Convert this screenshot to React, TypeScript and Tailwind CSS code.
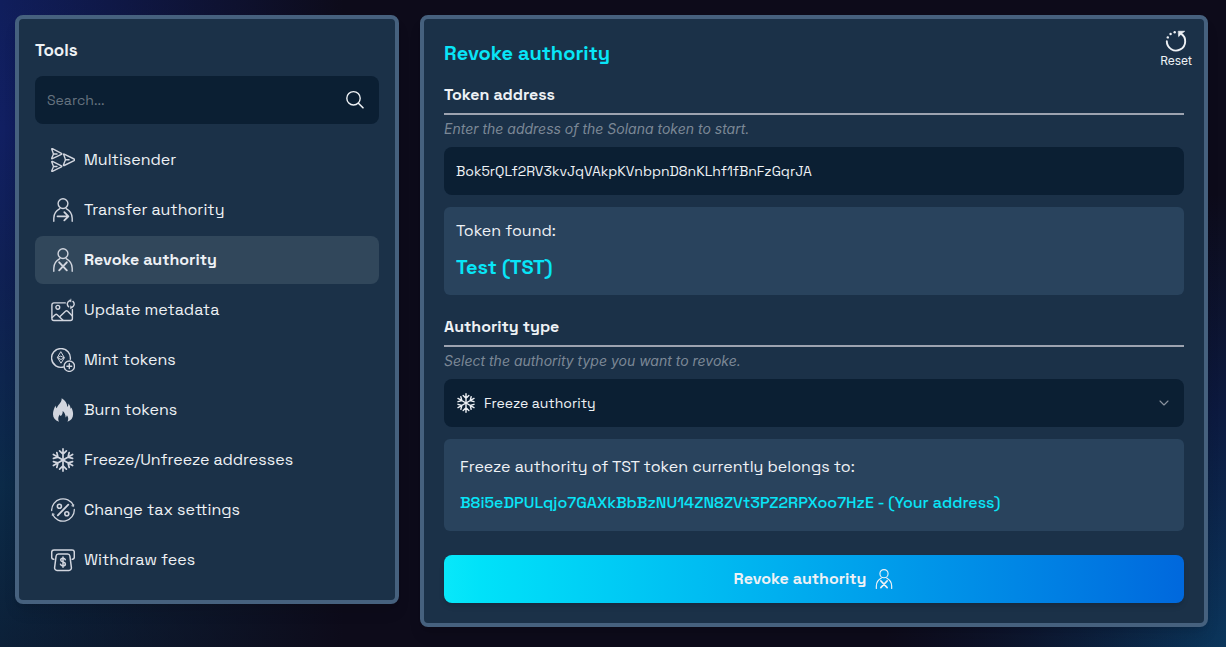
import React from 'react';

type IconProps = { className?: string };

function Icon({ className = 'size-6', children }: React.PropsWithChildren<IconProps>) {
  return (
    <svg
      viewBox="0 0 24 24"
      className={`${className} shrink-0`}
      fill="none"
      stroke="currentColor"
      strokeWidth="1.4"
      strokeLinecap="round"
      strokeLinejoin="round"
      aria-hidden="true"
    >
      {children}
    </svg>
  );
}

const MultisenderIcon = (props: IconProps) => (
  <Icon {...props}>
    <path d="M12.8 6.8c-.5-.5-.2-1 .4-.7l9.9 4.9c.7.4.7 1.2 0 1.6l-9.9 4.9c-.6.3-.9-.2-.7-.7l2-5z" />
    <path d="M14.5 11.8h3.6M.8 1.3c-.2-.5.1-.8.6-.6l9 4.6c.5.3.5.8 0 1.1l-9 4.3c-.5.2-.8-.1-.6-.6L2.5 6z" />
    <path d="M2.5 6H6M.8 14c-.2-.5.1-.8.6-.6l9 4.4c.5.3.5.8 0 1.1l-9 4.4c-.5.2-.8-.1-.6-.6l1.7-4.2zM2.5 18.5H6" />
  </Icon>
);

const TransferIcon = (props: IconProps) => (
  <Icon {...props}>
    <circle cx="12" cy="5.6" r="4.9" />
    <path d="M2.8 23.3v-3c0-4.3 2.4-7.6 6-9.6M21.2 23.3v-3c0-4.3-2.4-7.6-6-9.6" />
    <path d="M6.5 18.3h10.8M13.3 14.2l4.1 4.1-4.1 4.1" strokeWidth="1.8" />
  </Icon>
);

const RevokeIcon = (props: IconProps) => (
  <Icon {...props}>
    <circle cx="12" cy="5.6" r="4.9" />
    <path d="M2.8 23.3v-3c0-4.3 2.4-7.6 6-9.6M21.2 23.3v-3c0-4.3-2.4-7.6-6-9.6" />
    <path d="M8.2 14.3l7.6 8M15.8 14.3l-7.6 8" strokeWidth="1.9" />
  </Icon>
);

const MetadataIcon = (props: IconProps) => (
  <Icon {...props}>
    <path d="M14.3 4.9H2.9a2 2 0 0 0-2 2v13.6a2 2 0 0 0 2 2h16.5a2 2 0 0 0 2-2V11.5" />
    <circle cx="6.8" cy="9.3" r="1.9" />
    <path d="M1.2 19.5l3-2.7a1.5 1.5 0 0 1 2 0l5.800 5.4M9 18.4l5.5-5.2a1.6 1.6 0 0 1 2.2 0l4.4 4.6" />
    <path d="M17.6 8.7a3.5 3.5 0 0 1 1.5-6.1M21.9 3.400a3.5 3.5 0 0 1-1.5 6.1" />
    <path d="M20.1 1.2v2.9l-1.9-1.4zM19.4 8v2.9l1.9-1.4z" fill="currentColor" strokeWidth=".4" />
  </Icon>
);

const MintIcon = (props: IconProps) => (
  <Icon {...props}>
    <path d="M12.5 19A9.4 9.4 0 1 1 19.3 11.2" />
    <path d="M10 4l3.4 5.7L10 15.2 6.6 9.7zM6.8 9.8l3.2 1.7 3.2-1.7L10 8.3z" strokeWidth="1" />
    <circle cx="18.3" cy="18.2" r="5.2" />
    <path d="M18.3 15.8v4.8M15.9 18.2h4.8" />
  </Icon>
);

const BurnIcon = (props: IconProps) => (
  <Icon {...props}>
    <path
      d="M10.7.2c3.6 2 5.4 4.9 5.6 8.8.9-.9 1.2-2 1-3.5 1.6 1.5 2.2 3.3 2.3 5.3.4-.3.6-.6.8-1.2 1.2 2.4 1.7 4.6 1.7 6.6 0 3.6-2 6.3-5.6 7.6 1.2-2.4.9-4.6-.6-6.5-.2 1-.6 1.7-1.3 2.2.1-2.8-.9-4.9-2.9-6.6.1 2.4-.6 3.8-2 5.2-.5-.3-.8-.8-.9-1.5-1.7 2.2-2 4.6-.9 7.2-3.8-1.3-5.9-4-5.9-7.5 0-3 1-5.6 2.5-8.8.2 1.3.6 2.2 1.4 2.8.1-3.2 5-5 4.8-10.1z"
      fill="currentColor"
      stroke="none"
    />
  </Icon>
);

const spokes = [0, 60, 120, 180, 240, 300];

const FreezeIcon = (props: IconProps) => (
  <Icon {...props}>
    {spokes.map((angle) => (
      <path key={angle} transform={`rotate(${angle} 12 12)`} d="M12 12V.9M8.6 2.9L12 6.2l3.4-3.3" strokeWidth="1.7" />
    ))}
  </Icon>
);

const TaxIcon = (props: IconProps) => (
  <Icon {...props}>
    <path d="M.7 12.5A11.3 11.3 0 0 1 22.2 7.3M23.3 11.5A11.3 11.3 0 0 1 1.8 16.7" strokeWidth="1.3" />
    <path d="M22.9 6.5l-.2 2.3-2-.9zM1.1 17.5l.2-2.3 2 .9z" fill="currentColor" strokeWidth=".4" />
    <circle cx="8.4" cy="8.2" r="2" strokeWidth="1.6" />
    <circle cx="15.8" cy="15.8" r="2" strokeWidth="1.6" />
    <path d="M17.3 6.7L6.8 17.3" strokeWidth="1.8" />
  </Icon>
);

const WithdrawIcon = (props: IconProps) => (
  <Icon {...props}>
    <path d="M2.9 11.2h-.3a1.9 1.9 0 0 1-1.9-1.9V4.2a2.2 2.2 0 0 1 2.2-2.2h18.2a2.2 2.2 0 0 1 2.2 2.2v5.1a1.9 1.9 0 0 1-1.9 1.9h-.3" strokeWidth="1.5" />
    <path d="M7.5 6h9a2.4 2.4 0 0 1 2.4 2l1.5 11.7a2.4 2.4 0 0 1-2.4 2.7H6a2.4 2.4 0 0 1-2.4-2.7L5.1 8a2.4 2.4 0 0 1 2.4-2z" strokeWidth="1.5" />
    <path d="M14.3 11.7c-.3-1-1.2-1.4-2.3-1.4-1.3 0-2.3.6-2.3 1.8 0 2.6 4.7 1.2 4.7 3.9 0 1.2-1 1.9-2.4 1.9-1.3 0-2.2-.6-2.5-1.6M12 9v10.2" strokeWidth="1.5" />
  </Icon>
);

const SearchIcon = (props: IconProps) => (
  <Icon {...props}>
    <circle cx="10.5" cy="10.3" r="6.7" />
    <path d="M15.4 15.2l4.6 4.6" strokeWidth="1.6" />
  </Icon>
);

const ResetIcon = (props: IconProps) => (
  <Icon {...props}>
    <path d="M2.8 12.3a9.2 9.2 0 1 0 14.2-7.7" strokeWidth="1.9" />
    <path d="M14.6 2.3h6l-2.7 2-3 3z" fill="currentColor" strokeWidth=".8" />
    <g fill="currentColor" stroke="none">
      <circle cx="3.8" cy="8.4" r="1.2" />
      <circle cx="6.6" cy="5" r="1.2" />
      <circle cx="10.7" cy="3.3" r="1.2" />
    </g>
  </Icon>
);

const ChevronIcon = (props: IconProps) => (
  <Icon {...props}>
    <path d="M4 8l8 8 8-8" strokeWidth="2.2" />
  </Icon>
);

const tools = [
  { name: 'Multisender', icon: MultisenderIcon },
  { name: 'Transfer authority', icon: TransferIcon },
  { name: 'Revoke authority', icon: RevokeIcon, active: true },
  { name: 'Update metadata', icon: MetadataIcon },
  { name: 'Mint tokens', icon: MintIcon },
  { name: 'Burn tokens', icon: BurnIcon },
  { name: 'Freeze/Unfreeze addresses', icon: FreezeIcon },
  { name: 'Change tax settings', icon: TaxIcon },
  { name: 'Withdraw fees', icon: WithdrawIcon },
];

function FieldHeader({ id, title, hint }: { id: string; title: string; hint: string }) {
  return (
    <>
      <label htmlFor={id} className="block border-b-2 border-[#9da3b0] pb-1.5 leading-6 font-bold">
        {title}
      </label>
      <p className="mt-1 font-[Inter,sans-serif] text-sm leading-5 text-[#7b8896] italic">{hint}</p>
    </>
  );
}

function ToolsPanel() {
  return (
    <aside className="w-96 shrink-0 rounded-lg border-4 border-[#46617e] bg-[#1b3148] p-4 shadow-lg">
      <h2 className="mb-2.5 text-[17px] leading-[31px] font-bold">Tools</h2>
      <div className="mb-3 flex h-12 items-center rounded-lg bg-[#0b1f33] px-3">
        <input
          type="search"
          aria-label="Search tools"
          placeholder="Search..."
          className="min-w-0 flex-1 bg-transparent text-sm outline-none placeholder:text-[#66737f]"
        />
        <button type="button" aria-label="Search">
          <SearchIcon />
        </button>
      </div>
      <nav className="flex flex-col gap-0.5">
        {tools.map((tool) => (
          <a
            key={tool.name}
            href="#"
            aria-current={tool.active ? 'page' : undefined}
            className={`flex h-12 items-center gap-[9px] rounded-lg px-4 ${tool.active ? 'bg-[#31475b] font-bold' : ''}`}
          >
            <tool.icon className="size-6 text-[#d2d6df]" />
            {tool.name}
          </a>
        ))}
      </nav>
    </aside>
  );
}

function RevokePanel() {
  return (
    <main className="min-w-0 flex-1 rounded-lg border-4 border-[#46617e] bg-[#1b3148] p-5 shadow-lg">
      <header className="mb-4 flex h-7 items-start justify-between">
        <h1 className="text-xl leading-7 font-bold text-[#08e5f7]">Revoke authority</h1>
        <button type="button" className="-mt-2.5 -mr-2 flex flex-col items-center font-[Inter,sans-serif] text-xs">
          <ResetIcon />
          Reset
        </button>
      </header>

      <FieldHeader id="token" title="Token address" hint="Enter the address of the Solana token to start." />
      <input
        id="token"
        defaultValue="Bok5rQLf2RV3kvJqVAkpKVnbpnD8nKLhf1fBnFzGqrJA"
        className="mt-2 h-12 w-full rounded-lg bg-[#0b1f33] px-3 text-sm outline-none"
      />
      <div className="mt-3 mb-5 rounded-md bg-[#29435d] p-3">
        <p className="leading-6">Token found:</p>
        <p className="mt-2 text-xl leading-8 font-bold text-[#08e5f7]">Test (TST)</p>
      </div>

      <FieldHeader id="authority" title="Authority type" hint="Select the authority type you want to revoke." />
      <div className="mt-2 flex h-12 items-center rounded-lg bg-[#0b1f33] px-3">
        <FreezeIcon className="mr-2 size-5" />
        <select id="authority" className="h-full min-w-0 flex-1 appearance-none bg-transparent text-sm outline-none">
          <option>Freeze authority</option>
        </select>
        <ChevronIcon className="mr-0.5 size-3 text-[#8b939f]" />
      </div>
      <div className="mt-3 rounded-md bg-[#29435d] p-4">
        <p className="leading-6">Freeze authority of TST token currently belongs to:</p>
        <p className="mt-3 leading-6 font-medium break-words text-[#08e5f7]">
          B8i5eDPULqjo7GAXkBbBzNU14ZN8ZVt3PZ2RPXoo7HzE - (Your address)
        </p>
      </div>

      <button
        type="button"
        className="mt-6 flex h-12 w-full items-center justify-center gap-2 rounded-lg bg-linear-to-r from-[#08e8fa] to-[#0068dd] font-bold shadow-md"
      >
        Revoke authority
        <RevokeIcon className="size-5" />
      </button>
    </main>
  );
}

export default function App() {
  return (
    <div className="flex min-h-screen items-start gap-[21px] bg-[#0d0b1a] bg-[linear-gradient(to_right,transparent_0%,#0d0b1a_28%,#0d0b1a_72%,transparent_100%),linear-gradient(to_bottom,transparent_0%,transparent_100%),radial-gradient(50%_75%_at_100%_105%,#0b3a60_0%,#0c1a40_55%,transparent_100%),linear-gradient(to_right,transparent_50%,#0d0b1a_50%),linear-gradient(to_bottom,#101e5c_0%,#111f62_20%,#0f2054_42%,#0b2a48_75%,#0c2038_100%)] pt-[15px] pr-[18px] pb-5 pl-[15px] font-['Space_Grotesk',Inter,sans-serif] text-base text-[#eef1f5]">
      <ToolsPanel />
      <RevokePanel />
    </div>
  );
}
